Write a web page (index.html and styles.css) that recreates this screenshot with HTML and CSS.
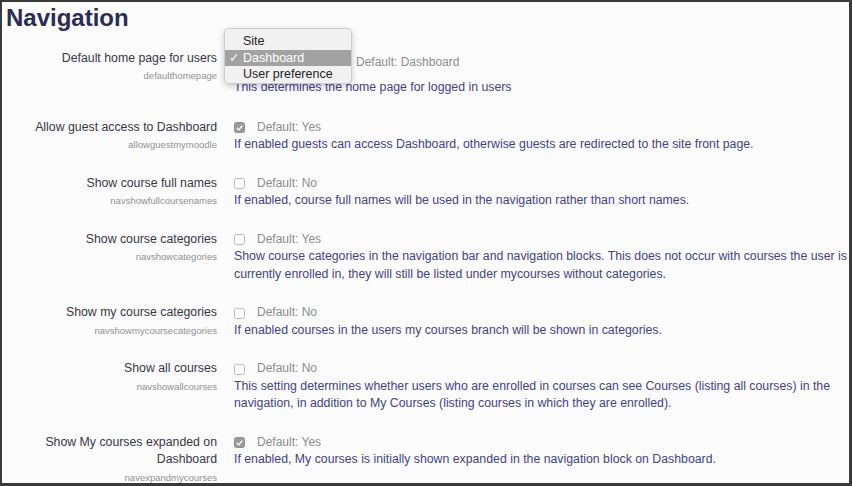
FILE: index.html
```html
<!DOCTYPE html>
<html>
<head>
<meta charset="utf-8">
<link rel="stylesheet" href="styles.css">
</head>
<body>
<div class="frame">
  <h2 class="title">Navigation</h2>
  <div class="settings">
    <div class="setting">
      <div class="label-col">
        <div class="label">Default home page for users</div>
        <div class="name">defaulthomepage</div>
      </div>
      <div class="content">
        <div class="control-line select-line">
          <div class="select-wrap">
            <div class="select-box"></div>
            <div class="popup">
              <div class="item">Site</div>
              <div class="item selected"><span class="check">✓</span>Dashboard</div>
              <div class="item">User preference</div>
            </div>
          </div>
          <span class="default">Default: Dashboard</span>
        </div>
        <div class="desc desc-select">This determines the home page for logged in users</div>
      </div>
    </div>

    <div class="setting">
      <div class="label-col">
        <div class="label">Allow guest access to Dashboard</div>
        <div class="name">allowguestmymoodle</div>
      </div>
      <div class="content">
        <div class="control-line"><span class="cb checked"><svg viewBox="0 0 10 10" width="10" height="10"><path d="M2.3 5.2 L4.2 7.1 L7.8 2.8" fill="none" stroke="#fff" stroke-width="1.4" stroke-linecap="round" stroke-linejoin="round"/></svg></span><span class="default">Default: Yes</span></div>
        <div class="desc">If enabled guests can access Dashboard, otherwise guests are redirected to the site front page.</div>
      </div>
    </div>

    <div class="setting">
      <div class="label-col">
        <div class="label">Show course full names</div>
        <div class="name">navshowfullcoursenames</div>
      </div>
      <div class="content">
        <div class="control-line"><span class="cb"></span><span class="default">Default: No</span></div>
        <div class="desc">If enabled, course full names will be used in the navigation rather than short names.</div>
      </div>
    </div>

    <div class="setting">
      <div class="label-col">
        <div class="label">Show course categories</div>
        <div class="name">navshowcategories</div>
      </div>
      <div class="content">
        <div class="control-line"><span class="cb"></span><span class="default">Default: Yes</span></div>
        <div class="desc">Show course categories in the navigation bar and navigation blocks. This does not occur with courses the user is currently enrolled in, they will still be listed under mycourses without categories.</div>
      </div>
    </div>

    <div class="setting">
      <div class="label-col">
        <div class="label">Show my course categories</div>
        <div class="name">navshowmycoursecategories</div>
      </div>
      <div class="content">
        <div class="control-line"><span class="cb"></span><span class="default">Default: No</span></div>
        <div class="desc">If enabled courses in the users my courses branch will be shown in categories.</div>
      </div>
    </div>

    <div class="setting">
      <div class="label-col">
        <div class="label">Show all courses</div>
        <div class="name">navshowallcourses</div>
      </div>
      <div class="content">
        <div class="control-line"><span class="cb"></span><span class="default">Default: No</span></div>
        <div class="desc">This setting determines whether users who are enrolled in courses can see Courses (listing all courses) in the navigation, in addition to My Courses (listing courses in which they are enrolled).</div>
      </div>
    </div>

    <div class="setting">
      <div class="label-col">
        <div class="label">Show My courses expanded on Dashboard</div>
        <div class="name">navexpandmycourses</div>
      </div>
      <div class="content">
        <div class="control-line"><span class="cb checked"><svg viewBox="0 0 10 10" width="10" height="10"><path d="M2.3 5.2 L4.2 7.1 L7.8 2.8" fill="none" stroke="#fff" stroke-width="1.4" stroke-linecap="round" stroke-linejoin="round"/></svg></span><span class="default">Default: Yes</span></div>
        <div class="desc">If enabled, My courses is initially shown expanded in the navigation block on Dashboard.</div>
      </div>
    </div>
  </div>
</div>
</body>
</html>
```

FILE: styles.css
```css
html, body {
  margin: 0;
  padding: 0;
}
body {
  width: 852px;
  height: 486px;
  overflow: hidden;
  font-family: "Liberation Sans", Arial, sans-serif;
}
.frame {
  box-sizing: border-box;
  width: 852px;
  height: 486px;
  border: 2px solid #3a3a3a;
  border-right-width: 3px;
  border-bottom-width: 3px;
  background: #fcfcfd;
  overflow: hidden;
  padding: 2px 0 0 0;
}
.title {
  margin: 0;
  padding-left: 4px;
  font-size: 24px;
  line-height: 28px;
  font-weight: bold;
  color: #2b2b57;
}
.settings {
  margin-top: 17.75px;
  display: flex;
  flex-direction: column;
  gap: 21px;
}
.setting {
  display: grid;
  grid-template-columns: 215px 1fr;
  column-gap: 17px;
  font-size: 12.3px;
  line-height: 17.5px;
}
.label-col {
  box-sizing: border-box;
  padding-left: 15px;
  text-align: right;
}
.label {
  color: #383846;
}
.name {
  font-size: 9.5px;
  color: #929292;
  line-height: 17.5px;
}
.content {
  padding-right: 2px;
}
.control-line {
  display: flex;
  align-items: center;
  height: 17.5px;
}
.select-line {
  height: 26px;
}
.desc {
  color: #43438a;
}
.desc-select {
  margin-top: 3px;
  margin-bottom: 1.5px;
}
.default {
  color: #8c8c8c;
  font-size: 12px;
}
.cb {
  box-sizing: border-box;
  width: 11px;
  height: 11px;
  border: 1px solid #bcbcbc;
  border-radius: 2.5px;
  background: #fff;
  margin-right: 12px;
  display: flex;
  align-items: center;
  justify-content: center;
}
.cb.checked {
  background: #9b9b9b;
  border-color: #8f8f8f;
}
.cb svg {
  display: block;
}
.select-wrap {
  position: relative;
  width: 117px;
  height: 22px;
  margin-right: 5px;
}
.select-box {
  box-sizing: border-box;
  height: 22px;
  border: 1px solid #c8c8c8;
  border-radius: 4px;
  background: #fff;
}
.popup {
  position: absolute;
  left: -10px;
  top: -23.5px;
  width: 128px;
  height: 56px;
  box-sizing: border-box;
  background: #f1f1f1;
  border: 1px solid #cdcdcd;
  border-radius: 5px;
  box-shadow: 0 2px 6px rgba(0, 0, 0, 0.22);
  padding-top: 4px;
  z-index: 2;
  font-size: 12.5px;
  color: #1e1e1e;
}
.item {
  position: relative;
  height: 16.5px;
  line-height: 16.5px;
  padding-left: 18px;
}
.item.selected {
  background: #a2a2a2;
  color: #fff;
}
.check {
  position: absolute;
  left: 4px;
  top: 0;
  font-family: "DejaVu Sans", sans-serif;
  font-size: 12.5px;
}
```
